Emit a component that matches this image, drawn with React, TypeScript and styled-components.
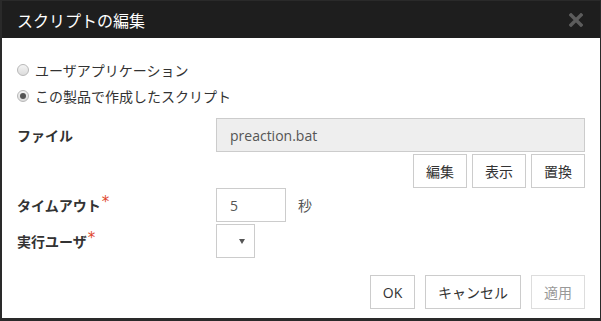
import React from "react";
import styled, { createGlobalStyle } from "styled-components";

const Global = createGlobalStyle`
  html, body { margin: 0; padding: 0; }
  body {
    background: #2a2a2a;
    font-family: "Open Sans", "Noto Sans CJK JP", sans-serif;
    font-size: 14px;
    color: #333;
  }
  * { box-sizing: border-box; }
`;

const Dialog = styled.div`
  width: 598px;
  height: 317px;
  margin: 1px 1px 3px 2px;
  background: #fff;
  display: flex;
  flex-direction: column;
`;

const Header = styled.div`
  height: 37px;
  background: #1e1e1e;
  display: flex;
  align-items: center;
  justify-content: space-between;
  padding: 0 17px 0 15px;
`;

const Title = styled.h1`
  margin: 0;
  font-size: 16px;
  font-weight: 400;
  color: #fff;
  line-height: 20px;
  font-family: "Noto Sans CJK JP", sans-serif;
`;

const Close = styled.button`
  border: 0;
  background: none;
  padding: 0;
  width: 14px;
  height: 14px;
  display: flex;
  cursor: pointer;
`;

const Body = styled.div`
  flex: 1;
  padding: 19px 15px 0 15px;
  display: flex;
  flex-direction: column;
`;

const RadioRow = styled.label`
  height: 26px;
  display: flex;
  align-items: center;
  gap: 6px;
  font-family: "Noto Sans CJK JP", sans-serif;
  color: #333;
  line-height: 20px;
`;

const RadioDot = styled.span<{ $checked?: boolean }>`
  width: 12px;
  height: 12px;
  border-radius: 50%;
  border: 1px solid #b8b8b8;
  background: linear-gradient(#f4f4f4, #dcdcdc);
  display: flex;
  align-items: center;
  justify-content: center;
  &::after {
    content: "";
    width: 6px;
    height: 6px;
    border-radius: 50%;
    background: ${(p) => (p.$checked ? "#555" : "transparent")};
  }
`;

const FormRow = styled.div<{ $mt?: number }>`
  display: grid;
  grid-template-columns: 199px 1fr;
  align-items: center;
  margin-top: ${(p) => p.$mt ?? 0}px;
`;

const Label = styled.div`
  font-weight: 700;
  font-family: "Noto Sans CJK JP", sans-serif;
  color: #333;
  line-height: 20px;
  display: flex;
  align-items: flex-start;
`;

const Req = styled.span`
  color: #e0452c;
  font-weight: 400;
  font-size: 15px;
  line-height: 14px;
  margin-left: 1px;
  font-family: "DejaVu Sans", sans-serif;
`;

const TextInput = styled.div<{ $width?: number; $disabled?: boolean }>`
  height: 34px;
  width: ${(p) => (p.$width ? `${p.$width}px` : "100%")};
  border: 1px solid #ccc;
  background: ${(p) => (p.$disabled ? "#eee" : "#fff")};
  color: #555;
  padding: 0 13px;
  display: flex;
  align-items: center;
  font-family: "Open Sans", "Noto Sans CJK JP", sans-serif;
`;

const Inline = styled.div`
  display: flex;
  align-items: center;
  gap: 12px;
`;

const Unit = styled.span`
  color: #555;
  font-family: "Noto Sans CJK JP", sans-serif;
`;

const Select = styled.div`
  width: 39px;
  height: 34px;
  border: 1px solid #ccc;
  background: #fff;
  display: flex;
  align-items: center;
  justify-content: flex-end;
  padding-right: 9px;
`;

const Caret = styled.span`
  width: 0;
  height: 0;
  border-left: 3px solid transparent;
  border-right: 3px solid transparent;
  border-top: 5px solid #555;
`;

const ButtonRow = styled.div<{ $gap: number; $mt: number }>`
  display: flex;
  justify-content: flex-end;
  gap: ${(p) => p.$gap}px;
  margin-top: ${(p) => p.$mt}px;
`;

const Button = styled.button<{ $w: number }>`
  width: ${(p) => p.$w}px;
  height: 34px;
  border: 1px solid #ccc;
  background: #fff;
  color: #333;
  font-size: 14px;
  font-family: "Open Sans", "Noto Sans CJK JP", sans-serif;
  padding: 0;
  cursor: pointer;
  &:disabled {
    border-color: #ddd;
    color: #999;
    cursor: default;
  }
`;

export default function App() {
  return (
    <>
      <Global />
      <Dialog>
        <Header>
          <Title>スクリプトの編集</Title>
          <Close aria-label="閉じる">
            <svg width="14" height="14" viewBox="0 0 14 14">
              <path d="M2 2 L12 12 M12 2 L2 12" stroke="#5c5c5c" strokeWidth="3.4" strokeLinecap="square" />
            </svg>
          </Close>
        </Header>
        <Body>
          <RadioRow>
            <RadioDot />
            ユーザアプリケーション
          </RadioRow>
          <RadioRow>
            <RadioDot $checked />
            この製品で作成したスクリプト
          </RadioRow>
          <FormRow $mt={9}>
            <Label>ファイル</Label>
            <TextInput $disabled>preaction.bat</TextInput>
          </FormRow>
          <ButtonRow $gap={5} $mt={2}>
            <Button $w={54}>編集</Button>
            <Button $w={54}>表示</Button>
            <Button $w={54}>置換</Button>
          </ButtonRow>
          <FormRow>
            <Label>
              タイムアウト<Req>*</Req>
            </Label>
            <Inline>
              <TextInput $width={70}>5</TextInput>
              <Unit>秒</Unit>
            </Inline>
          </FormRow>
          <FormRow $mt={2}>
            <Label>
              実行ユーザ<Req>*</Req>
            </Label>
            <Select>
              <Caret />
            </Select>
          </FormRow>
          <ButtonRow $gap={10} $mt={17}>
            <Button $w={45}>OK</Button>
            <Button $w={96}>キャンセル</Button>
            <Button $w={54} disabled>
              適用
            </Button>
          </ButtonRow>
        </Body>
      </Dialog>
    </>
  );
}
